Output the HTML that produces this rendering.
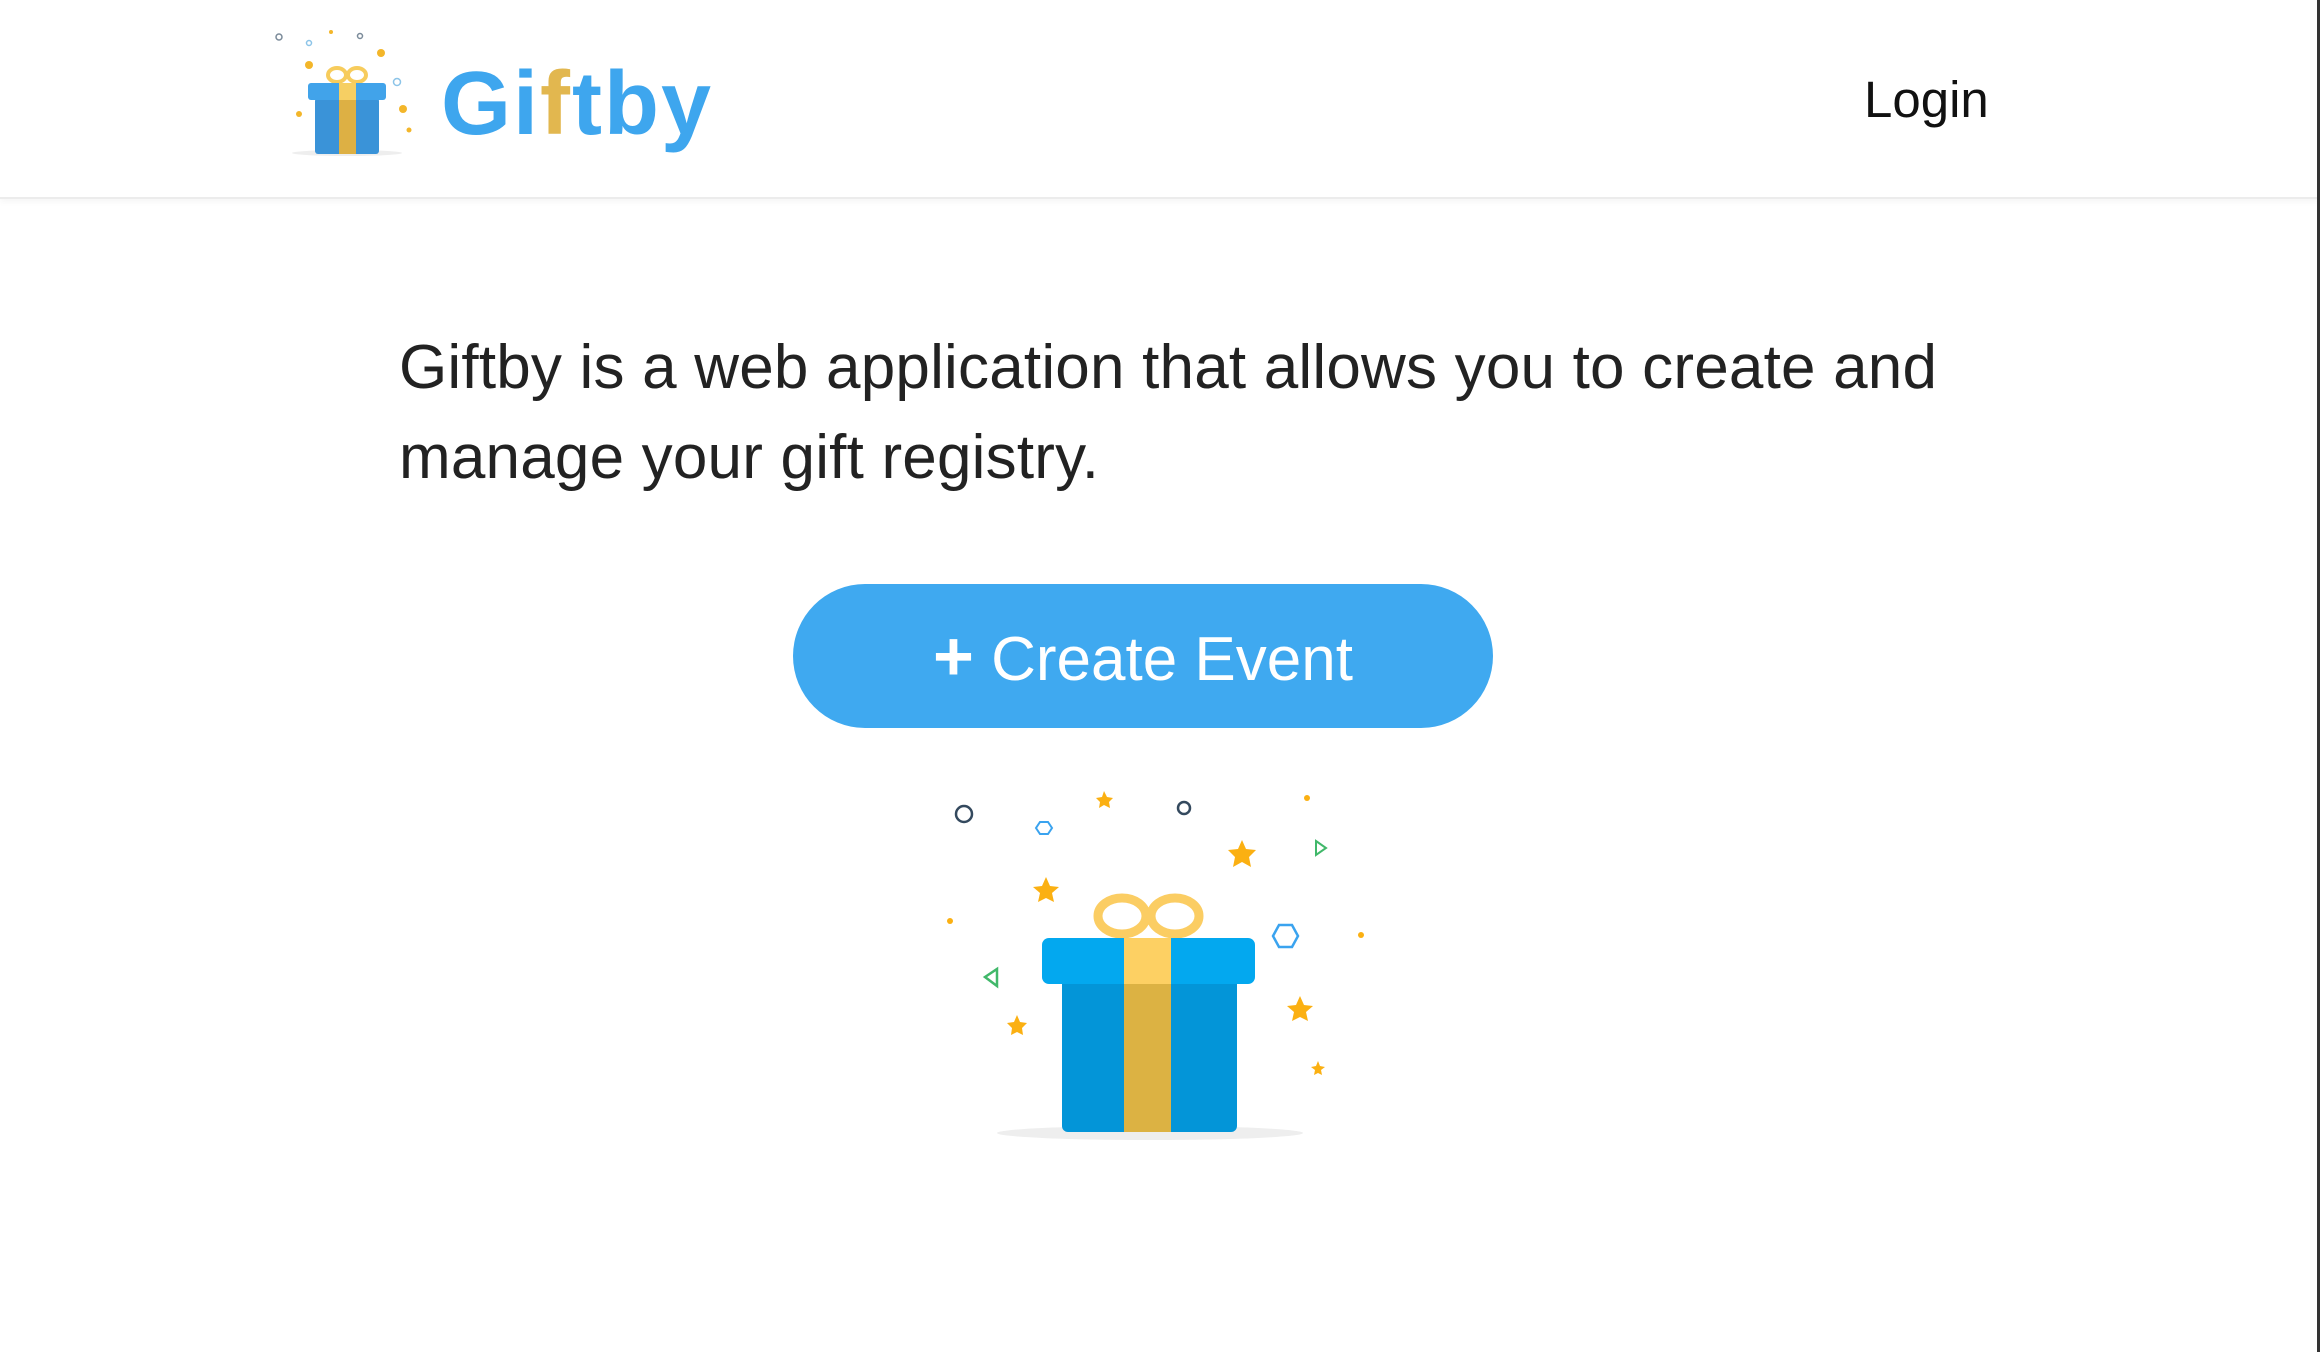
<!DOCTYPE html>
<html><head><meta charset="utf-8"><style>
html,body{margin:0;padding:0;width:2320px;height:1352px;overflow:hidden;background:#fff;position:relative;font-family:"Liberation Sans",sans-serif}
.hdr{position:absolute;left:0;top:0;width:2320px;height:197px;border-bottom:2px solid #ececec;box-shadow:0 3px 6px rgba(0,0,0,0.04)}
.rb{position:absolute;right:0;top:0;width:3px;height:1352px;background:#333}
.logo{position:absolute;left:441px;top:49px;font-size:90px;font-weight:bold;color:#3ea6ee;letter-spacing:2px;line-height:110px}
.logo span{color:#e2b74f}
.login{position:absolute;left:1864px;top:70px;font-size:51px;color:#111;line-height:60px}
.intro{position:absolute;left:399px;top:323px;width:1700px;font-size:62px;line-height:90px;color:#222;letter-spacing:0.2px}
.btn{position:absolute;left:793px;top:584px;width:700px;height:144px;border-radius:72px;background:#3fa9f0;color:#fff;font-size:62px;line-height:144px;text-align:center}
svg{position:absolute;left:0;top:0}
</style></head><body>
<div class="hdr"></div>
<div class="rb"></div>
<svg width="2320" height="1352" viewBox="0 0 2320 1352">
 <!-- logo gift -->
 <ellipse cx="347" cy="153" rx="55" ry="3" fill="#eee"/>
 <ellipse cx="337" cy="75" rx="9" ry="7" fill="none" stroke="#f7cc5c" stroke-width="4"/>
 <ellipse cx="357" cy="75" rx="9" ry="7" fill="none" stroke="#f7cc5c" stroke-width="4"/>
 <rect x="315" y="98" width="64" height="56" rx="3" fill="#3a93d8"/>
 <rect x="308" y="83" width="78" height="17" rx="3" fill="#41a3ea"/>
 <rect x="339" y="83" width="17" height="17" fill="#f6cf63"/>
 <rect x="339" y="100" width="17" height="54" fill="#ddb044"/>
 <circle cx="279" cy="37" r="3" fill="none" stroke="#7a8a99" stroke-width="1.5"/>
 <circle cx="309" cy="43" r="2.5" fill="none" stroke="#8cc4e8" stroke-width="1.5"/>
 <circle cx="360" cy="36" r="2.5" fill="none" stroke="#7a8a99" stroke-width="1.5"/>
 <circle cx="397" cy="82" r="3.5" fill="none" stroke="#8cc4e8" stroke-width="1.5"/>
 <circle cx="331" cy="32" r="2" fill="#f3b62a"/><circle cx="309" cy="65" r="4" fill="#f3b62a"/>
 <circle cx="381" cy="53" r="4" fill="#f3b62a"/><circle cx="403" cy="109" r="4" fill="#f3b62a"/>
 <circle cx="299" cy="114" r="3" fill="#f3b62a"/><circle cx="409" cy="130" r="2.5" fill="#f3b62a"/>
 <!-- main gift -->
 <ellipse cx="1150" cy="1133" rx="153" ry="7" fill="#eee"/>
 <ellipse cx="1122" cy="916" rx="24" ry="18" fill="none" stroke="#fbcd63" stroke-width="9"/>
 <ellipse cx="1175" cy="916" rx="24" ry="18" fill="none" stroke="#fbcd63" stroke-width="9"/>
 <rect x="1062" y="978" width="175" height="154" rx="6" fill="#0395d8"/>
 <rect x="1042" y="938" width="213" height="46" rx="7" fill="#03a8ef"/>
 <rect x="1124" y="938" width="47" height="46" fill="#fdd063"/>
 <rect x="1124" y="984" width="47" height="148" fill="#dcb243"/>
 <circle cx="964" cy="814" r="8" fill="none" stroke="#34495e" stroke-width="2.5"/>
 <circle cx="1184" cy="808" r="6" fill="none" stroke="#34495e" stroke-width="2.5"/>
 <polygon points="1040,822 1048,822 1052,828 1048,834 1040,834 1036,828" fill="none" stroke="#3aa3ef" stroke-width="2"/>
 <polygon points="1279,925 1292,925 1298,936 1292,947 1279,947 1273,936" fill="none" stroke="#3aa3ef" stroke-width="2.5"/>
 <polygon points="985,977 997,969 997,986" fill="none" stroke="#41b86a" stroke-width="2.5"/>
 <polygon points="1316,841 1326,848 1316,855" fill="none" stroke="#41b86a" stroke-width="2"/>
 <g fill="#fbb012">
  <path d="M1104,791 l3,6 6,1 -4,4 1,6 -6,-3 -5,3 1,-6 -4,-4 6,-1z"/>
  <path d="M1242,840 l4,9 10,1 -7,7 2,10 -9,-5 -9,5 2,-10 -7,-7 10,-1z"/>
  <path d="M1046,877 l4,9 9,1 -7,6 2,9 -8,-4 -8,4 2,-9 -7,-6 9,-1z"/>
  <path d="M1300,996 l4,9 9,1 -7,6 2,9 -8,-4 -8,4 2,-9 -7,-6 9,-1z"/>
  <path d="M1017,1015 l3,7 7,1 -5,5 1,7 -6,-3 -6,3 1,-7 -5,-5 7,-1z"/>
  <path d="M1318,1061 l2,5 5,1 -4,3 1,5 -4,-2 -4,2 1,-5 -4,-3 5,-1z"/>
  <circle cx="1307" cy="798" r="3"/><circle cx="950" cy="921" r="3"/><circle cx="1361" cy="935" r="3"/>
 </g>
</svg>
<div class="logo">Gi<span>f</span>tby</div>
<div class="login">Login</div>
<div class="intro">Giftby is a web application that allows you to create and<br>manage your gift registry.</div>
<div class="btn"><span style="font-weight:bold;font-size:70px">+</span> Create Event</div>
</body></html>
